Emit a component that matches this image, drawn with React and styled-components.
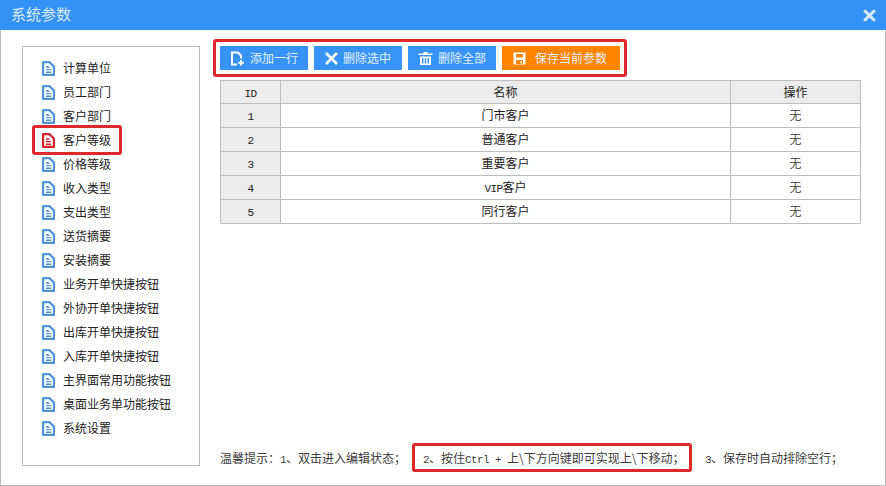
import React from 'react';
import styled, { createGlobalStyle } from 'styled-components';

const cjk = '"Noto Sans CJK SC", "Noto Sans", sans-serif';

const GlobalStyle = createGlobalStyle`
  html, body {
    margin: 0;
    padding: 0;
    background: #fff;
    font-family: ${cjk};
    font-size: 12px;
  }
`;

const Dialog = styled.div`
  width: 886px;
  height: 486px;
  box-sizing: border-box;
  display: flex;
  flex-direction: column;
  background: #fff;
  border: 1px solid #bcbcbc;
  border-top: none;
`;

const TitleBar = styled.div`
  height: 30px;
  margin: 0 -1px;
  flex: none;
  display: flex;
  align-items: center;
  justify-content: space-between;
  padding: 0 10px 0 11px;
  background: #3492f5;
  color: #d8eafc;
  font-size: 15px;
`;

const TitleText = styled.span`
  line-height: 28px;
  padding-bottom: 2px;
`;

const CloseIcon = styled.svg`
  width: 13px;
  height: 13px;
  display: block;
`;

const Body = styled.div`
  flex: 1;
  min-height: 0;
  display: flex;
  padding: 16px 24px 19px 21px;
  gap: 20px;
`;

const SideBox = styled.div`
  width: 178px;
  flex: none;
  box-sizing: border-box;
  border: 1px solid #bcbcbc;
  padding: 9px 0 0 19px;
`;

const SideItem = styled.div`
  position: relative;
  height: 24px;
  display: flex;
  align-items: center;
  gap: 8px;
  color: #222;
  line-height: 24px;
`;

const HighlightBox = styled.span`
  position: absolute;
  left: -10px;
  top: -3px;
  width: 90px;
  height: 30px;
  box-sizing: border-box;
  border: 3px solid #e0272b;
  border-radius: 3px;
`;

const FileSvg = styled.svg`
  width: 13px;
  height: 15px;
  flex: none;
  display: block;
`;

const Main = styled.div`
  flex: 1;
  min-width: 0;
  display: flex;
  flex-direction: column;
`;

const Toolbar = styled.div`
  align-self: flex-start;
  display: flex;
  gap: 6px;
  margin: -7px 0 3px -7px;
  padding: 4px;
  border: 3px solid #e0272b;
  border-radius: 3px;
`;

const ToolButton = styled.button`
  width: ${(p) => p.$width}px;
  height: 24px;
  box-sizing: border-box;
  border: none;
  padding: 0 0 0 ${(p) => p.$pad}px;
  display: flex;
  align-items: center;
  gap: ${(p) => p.$gap}px;
  background: ${(p) => (p.$warn ? '#ff8400' : '#3794f6')};
  color: #e4f1fe;
  font-family: ${cjk};
  font-size: 12px;
  white-space: nowrap;
`;

const ButtonLabel = styled.span`
  padding-bottom: 2px;
`;

const ButtonIcon = styled.svg`
  width: 15px;
  height: 15px;
  flex: none;
  display: block;
`;

const Table = styled.div`
  width: 641px;
  box-sizing: border-box;
  border: 1px solid #bdbdbd;
  border-bottom: none;
  border-radius: 0 0 2px 2px;
`;

const Row = styled.div`
  height: ${(p) => (p.$head ? 23 : 24)}px;
  box-sizing: border-box;
  display: grid;
  grid-template-columns: 59px 450px 1fr;
  border-bottom: 1px solid #bdbdbd;
  background: ${(p) => (p.$head ? '#ececec' : '#fff')};
`;

const Cell = styled.div`
  display: flex;
  align-items: center;
  justify-content: center;
  padding-bottom: ${(p) => (p.$headCell ? 1 : 2)}px;
  color: ${(p) => p.$color || '#222'};
  background: ${(p) => p.$bg || 'transparent'};
  border-left: ${(p) => (p.$first ? 'none' : '1px solid #bdbdbd')};
`;

const Latin = styled.span`
  font-family: "Liberation Mono", monospace;
  font-size: 11px;
  letter-spacing: -0.6px;
`;

const Footer = styled.div`
  margin-top: auto;
  margin-bottom: -6px;
  display: flex;
  align-items: center;
  color: #3c3c3c;
  white-space: pre;
`;

const HintText = styled.span`
  padding-bottom: 1px;
`;

const HintBox = styled.div`
  height: 29px;
  width: 280px;
  box-sizing: border-box;
  display: flex;
  align-items: center;
  margin: 0 13px 0 6px;
  padding-left: 8px;
  border: 3px solid #e0272b;
  border-radius: 3px;
`;

const sideItems = [
  '计算单位', '员工部门', '客户部门', '客户等级', '价格等级', '收入类型', '支出类型', '送货摘要',
  '安装摘要', '业务开单快捷按钮', '外协开单快捷按钮', '出库开单快捷按钮', '入库开单快捷按钮',
  '主界面常用功能按钮', '桌面业务单功能按钮', '系统设置',
];

const customers = ['门市客户', '普通客户', '重要客户', 'VIP客户', '同行客户'];

const FileIcon = ({ color }) => (
  <FileSvg viewBox="0 0 13 15" fill="none" stroke={color} strokeWidth="2.2">
    <path d="M1.1 1.1h6.4l4.4 4.4v8.4H1.1z" strokeLinejoin="round" />
    <path d="M4 6h3.5M4 8.6h5M4 11.3h5" strokeWidth="1.4" />
  </FileSvg>
);

const AddIcon = () => (
  <ButtonIcon viewBox="0 0 15 15" fill="none" stroke="#fff" strokeWidth="2">
    <path d="M7 13.5H2V1.5h6l3 3v3" />
    <path d="M11 9v5.5M8.2 11.8h5.6" />
  </ButtonIcon>
);

const CrossIcon = () => (
  <ButtonIcon viewBox="0 0 15 15" fill="none" stroke="#fff" strokeWidth="2.6">
    <path d="M2 2l11 11M13 2L2 13" />
  </ButtonIcon>
);

const TrashIcon = () => (
  <ButtonIcon viewBox="0 0 15 15" fill="#fff">
    <path d="M5.5 1h4v1.5h5V4H.5V2.5h5zM2 5.5h11V14H2zM4 7v5.5h1.5V7zM6.8 7v5.5h1.4V7zM9.5 7v5.5H11V7z" fillRule="evenodd" />
  </ButtonIcon>
);

const SaveIcon = () => (
  <ButtonIcon viewBox="0 0 15 15" fill="#fff">
    <path d="M1.5 1.5h12v12h-12zM4 3v3.5h7V3zM4 9v4h7V9z" fillRule="evenodd" />
    <path d="M8.5 10h1.5v2.5H8.5z" />
  </ButtonIcon>
);

const App = () => (
  <Dialog>
    <GlobalStyle />
    <TitleBar>
      <TitleText>系统参数</TitleText>
      <CloseIcon viewBox="0 0 13 13" fill="none" stroke="#d9ecff" strokeWidth="3">
        <path d="M1.2 1.2l10.6 10.6M11.8 1.2L1.2 11.8" />
      </CloseIcon>
    </TitleBar>
    <Body>
      <SideBox>
        {sideItems.map((name) => (
          <SideItem key={name}>
            {name === '客户等级' && <HighlightBox />}
            <FileIcon color={name === '客户等级' ? '#d9212c' : '#4d94d8'} />
            {name}
          </SideItem>
        ))}
      </SideBox>
      <Main>
        <Toolbar>
          <ToolButton $width={88} $pad={10} $gap={5}><AddIcon /><ButtonLabel>添加一行</ButtonLabel></ToolButton>
          <ToolButton $width={88} $pad={10} $gap={4}><CrossIcon /><ButtonLabel>删除选中</ButtonLabel></ToolButton>
          <ToolButton $width={88} $pad={10} $gap={5}><TrashIcon /><ButtonLabel>删除全部</ButtonLabel></ToolButton>
          <ToolButton $width={118} $pad={10} $gap={8} $warn><SaveIcon /><ButtonLabel>保存当前参数</ButtonLabel></ToolButton>
        </Toolbar>
        <Table>
          <Row $head>
            <Cell $first $headCell><span><Latin>ID</Latin></span></Cell>
            <Cell $headCell>名称</Cell>
            <Cell $headCell>操作</Cell>
          </Row>
          {customers.map((name, i) => (
            <Row key={name}>
              <Cell $first $bg="#ececec"><span><Latin>{i + 1}</Latin></span></Cell>
              <Cell>
                {name.startsWith('VIP') ? (<span><Latin>VIP</Latin>客户</span>) : name}
              </Cell>
              <Cell $color="#555">无</Cell>
            </Row>
          ))}
        </Table>
        <Footer>
          <HintText>温馨提示：<Latin>1</Latin>、双击进入编辑状态；</HintText>
          <HintBox>
            <HintText><Latin>2</Latin>、按住<Latin>Ctrl + </Latin>上\下方向键即可实现上\下移动；</HintText>
          </HintBox>
          <HintText><Latin>3</Latin>、保存时自动排除空行；</HintText>
        </Footer>
      </Main>
    </Body>
  </Dialog>
);

export default App;
